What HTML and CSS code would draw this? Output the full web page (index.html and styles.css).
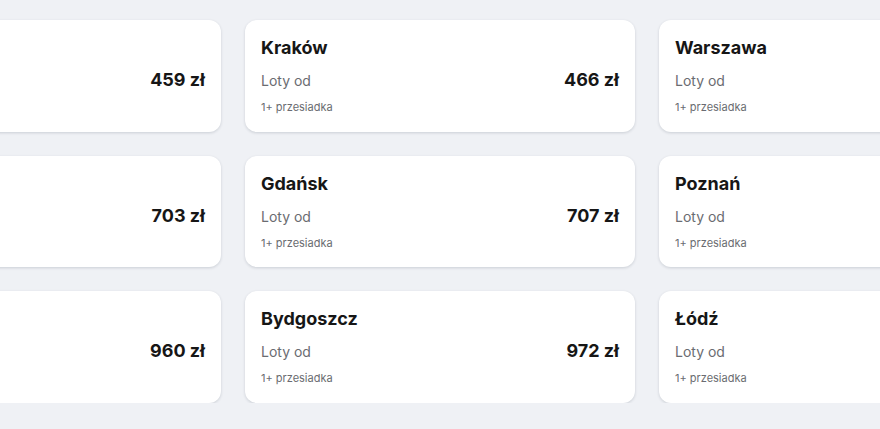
FILE: index.html
```html
<!doctype html>
<html lang="pl">
<head>
<meta charset="utf-8">
<title>Loty</title>
<link rel="stylesheet" href="styles.css">
</head>
<body>
    <div class="destinations">
        <a class="card" href="#">
            <h3 class="card-title">Wrocław</h3>
            <div class="card-row"><span class="card-label">Loty od</span><span class="card-price">459 zł</span></div>
            <div class="card-note">1+ przesiadka</div>
        </a>
        <a class="card" href="#">
            <h3 class="card-title">Kraków</h3>
            <div class="card-row"><span class="card-label">Loty od</span><span class="card-price">466 zł</span></div>
            <div class="card-note">1+ przesiadka</div>
        </a>
        <a class="card" href="#">
            <h3 class="card-title">Warszawa</h3>
            <div class="card-row"><span class="card-label">Loty od</span><span class="card-price">481 zł</span></div>
            <div class="card-note">1+ przesiadka</div>
        </a>

        <a class="card" href="#">
            <h3 class="card-title">Katowice</h3>
            <div class="card-row"><span class="card-label">Loty od</span><span class="card-price">703 zł</span></div>
            <div class="card-note">1+ przesiadka</div>
        </a>
        <a class="card" href="#">
            <h3 class="card-title">Gdańsk</h3>
            <div class="card-row"><span class="card-label">Loty od</span><span class="card-price">707 zł</span></div>
            <div class="card-note">1+ przesiadka</div>
        </a>
        <a class="card" href="#">
            <h3 class="card-title">Poznań</h3>
            <div class="card-row"><span class="card-label">Loty od</span><span class="card-price">712 zł</span></div>
            <div class="card-note">1+ przesiadka</div>
        </a>

        <a class="card" href="#">
            <h3 class="card-title">Szczecin</h3>
            <div class="card-row"><span class="card-label">Loty od</span><span class="card-price">960 zł</span></div>
            <div class="card-note">1+ przesiadka</div>
        </a>
        <a class="card" href="#">
            <h3 class="card-title">Bydgoszcz</h3>
            <div class="card-row"><span class="card-label">Loty od</span><span class="card-price">972 zł</span></div>
            <div class="card-note">1+ przesiadka</div>
        </a>
        <a class="card" href="#">
            <h3 class="card-title">Łódź</h3>
            <div class="card-row"><span class="card-label">Loty od</span><span class="card-price">985 zł</span></div>
            <div class="card-note">1+ przesiadka</div>
        </a>
    </div>
</body>
</html>
```

FILE: styles.css
```css
html
{
    background:#eff1f5;
}
body
{
    margin:0;
    overflow:hidden;
    font-family:Inter, "Noto Sans", sans-serif;
    color:#161616;
}
.destinations
{
    display:grid;
    grid-template-columns:repeat(3, 390px);
    gap:24px;
    margin-left:-169px;
    padding-top:20px;
}
.card
{
    display:block;
    background:#fff;
    border-radius:12px;
    box-shadow:0 1px 3px rgba(20,30,50,0.16);
    padding:16px 16px 16.5px;
    color:inherit;
    text-decoration:none;
}
.card-title
{
    margin:0 0 8px;
    font-size:18px;
    line-height:24px;
    font-weight:700;
}
.card-row
{
    display:flex;
    justify-content:space-between;
    align-items:baseline;
    height:24px;
    margin-bottom:7px;
}
.card-label
{
    font-size:14px;
    color:#6a6c71;
}
.card-price
{
    font-size:18px;
    line-height:24px;
    font-weight:700;
}
.card-note
{
    font-size:11px;
    line-height:16px;
    color:#6a6c71;
}
```
